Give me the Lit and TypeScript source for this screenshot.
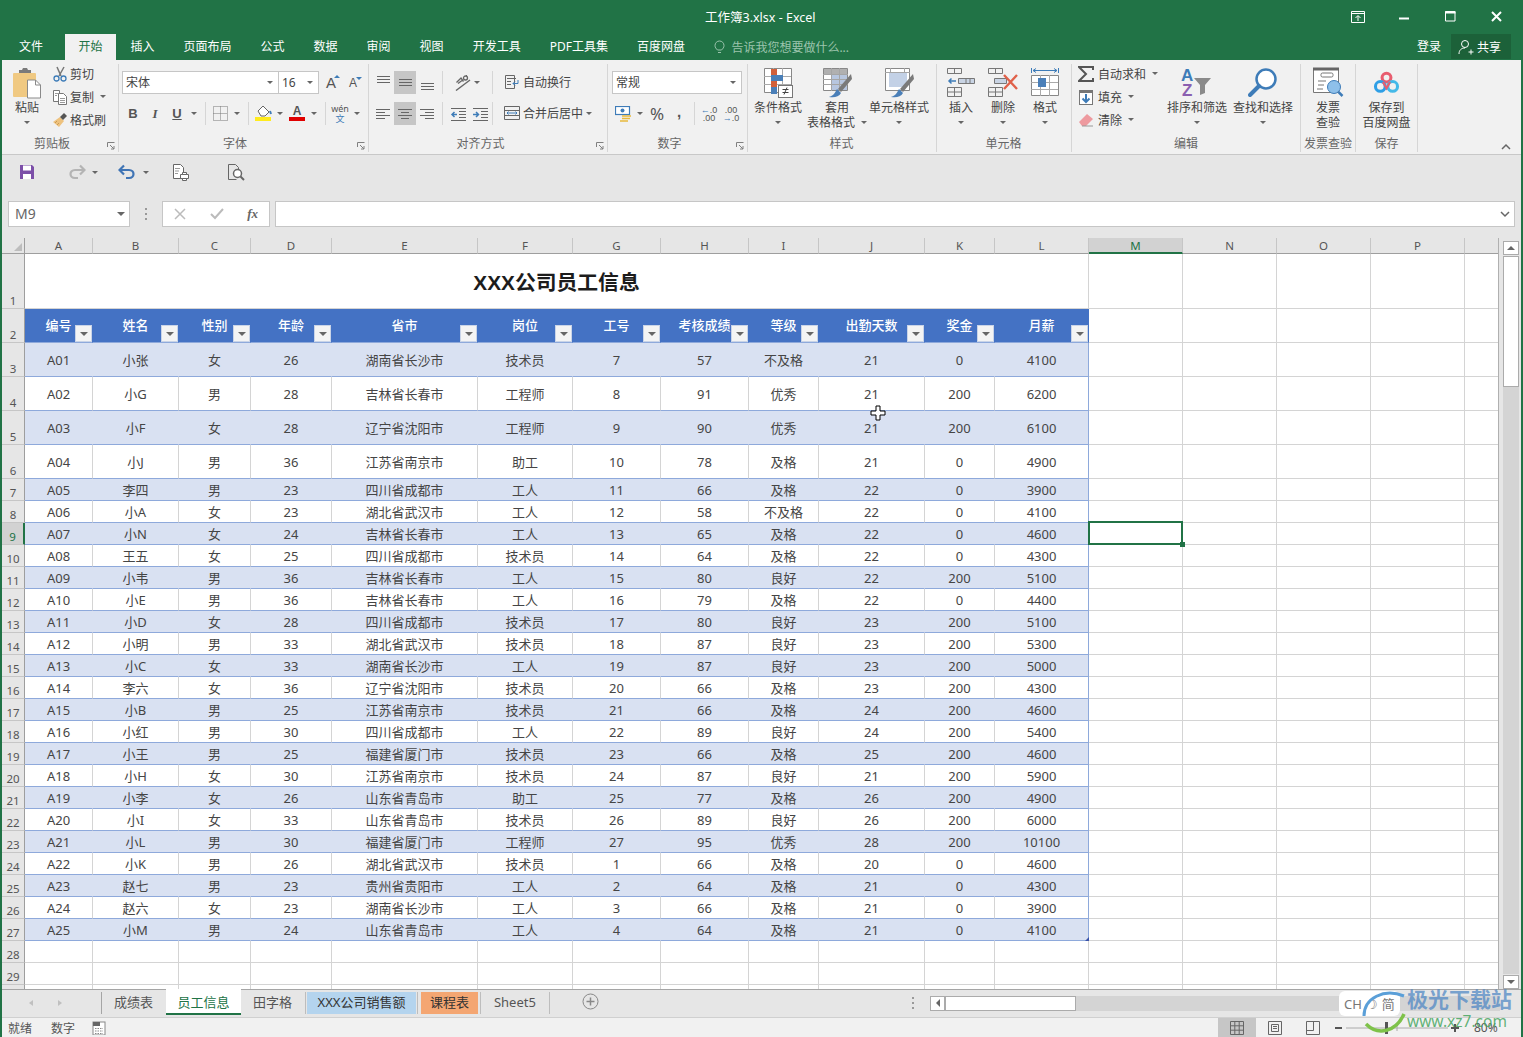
import { LitElement, css, html } from "lit";
import { customElement } from "lit/decorators.js";

// the last column is only a sliver at the window edge, its letter does not show
const COLS = "ABCDEFGHIJKLMNOP".split("").concat("");
const HEAD = ["编号", "姓名", "性别", "年龄", "省市", "岗位", "工号", "考核成绩", "等级", "出勤天数", "奖金", "月薪"];
// columns holding Chinese text sit a pixel higher than the digit columns
const CJK_COLS = [1, 2, 4, 5, 8];
const DATA = `A01 小张 女 26 湖南省长沙市 技术员 7 57 不及格 21 0 4100
A02 小G 男 28 吉林省长春市 工程师 8 91 优秀 21 200 6200
A03 小F 女 28 辽宁省沈阳市 工程师 9 90 优秀 21 200 6100
A04 小J 男 36 江苏省南京市 助工 10 78 及格 21 0 4900
A05 李四 男 23 四川省成都市 工人 11 66 及格 22 0 3900
A06 小A 女 23 湖北省武汉市 工人 12 58 不及格 22 0 4100
A07 小N 女 24 吉林省长春市 工人 13 65 及格 22 0 4600
A08 王五 女 25 四川省成都市 技术员 14 64 及格 22 0 4300
A09 小韦 男 36 吉林省长春市 工人 15 80 良好 22 200 5100
A10 小E 男 36 吉林省长春市 工人 16 79 及格 22 0 4400
A11 小D 女 28 四川省成都市 技术员 17 80 良好 23 200 5100
A12 小明 男 33 湖北省武汉市 技术员 18 87 良好 23 200 5300
A13 小C 女 33 湖南省长沙市 工人 19 87 良好 23 200 5000
A14 李六 女 36 辽宁省沈阳市 技术员 20 66 及格 23 200 4300
A15 小B 男 25 江苏省南京市 技术员 21 66 及格 24 200 4600
A16 小红 男 30 四川省成都市 工人 22 89 良好 24 200 5400
A17 小王 男 25 福建省厦门市 技术员 23 66 及格 25 200 4600
A18 小H 女 30 江苏省南京市 技术员 24 87 良好 21 200 5900
A19 小李 女 26 山东省青岛市 助工 25 77 及格 26 200 4900
A20 小I 女 33 山东省青岛市 技术员 26 89 良好 26 200 6000
A21 小L 男 30 福建省厦门市 工程师 27 95 优秀 28 200 10100
A22 小K 男 26 湖北省武汉市 技术员 1 66 及格 20 0 4600
A23 赵七 男 23 贵州省贵阳市 工人 2 64 及格 21 0 4300
A24 赵六 女 23 湖南省长沙市 工人 3 66 及格 21 0 3900
A25 小M 男 24 山东省青岛市 工人 4 64 及格 21 0 4100`
  .split("\n")
  .map((l) => l.split(" "));

const TABS = ["插入", "页面布局", "公式", "数据", "审阅", "视图", "开发工具", "PDF工具集", "百度网盘"];

// ribbon icons, drawn at their real pixel size
const icons = {
  paste: html`<svg width="30" height="32" viewBox="0 0 30 32"><rect x="1" y="6" width="23" height="24" rx="1" fill="#f0c982"/><path d="M7 6V3h3l1-2h4l1 2h3v3z" fill="#7a7a7a"/><path d="M15.500 13h8l5 5v13h-13z" fill="#fff" stroke="#8a8a8a"/><path d="M23.500 13v5h5" fill="none" stroke="#8a8a8a"/></svg>`,
  cut: html`<svg width="16" height="16" viewBox="0 0 16 16"><path d="M5 1l4 9M12 1l-5 9" stroke="#777" stroke-width="1.500" fill="none"/><circle cx="4.500" cy="12.500" r="2.500" fill="none" stroke="#3e7cb8" stroke-width="1.300"/><circle cx="11.500" cy="12.500" r="2.500" fill="none" stroke="#3e7cb8" stroke-width="1.300"/></svg>`,
  copy: html`<svg width="16" height="16" viewBox="0 0 16 16" fill="#fff" stroke="#777"><path d="M1.500 1.500h6v11h-6z"/><path d="M6.500 4.500h5l3 3v8h-8z"/><path d="M8 9.500h5M8 11.500h5M8 13.500h5M3 4.500h3M3 6.500h2" stroke="#999"/></svg>`,
  brush: html`<svg width="16" height="16" viewBox="0 0 16 16"><path d="M8 5l4 4-5 6-6-5z" fill="#eec27e"/><path d="M8 5l4-4 3 3-4 4z" fill="#555"/><path d="M5 9l-2 2M7 11l-2 2" stroke="#c89a55"/></svg>`,
  alignTop: html`<svg width="16" height="16" viewBox="0 0 16 16" stroke="#666"><path d="M2 2.500h13M2 5.500h13M2 8.500h13" transform="translate(0 -1)"/></svg>`,
  alignMid: html`<svg width="16" height="16" viewBox="0 0 16 16" stroke="#666"><path d="M2 4.500h13M2 7.500h13M2 10.500h13"/></svg>`,
  alignBot: html`<svg width="16" height="16" viewBox="0 0 16 16" stroke="#666"><path d="M2 8.500h13M2 11.500h13M2 14.500h13"/></svg>`,
  left: html`<svg width="16" height="16" viewBox="0 0 16 16" stroke="#666"><path d="M1 3.500h14M1 6.500h9M1 9.500h14M1 12.500h9"/></svg>`,
  center: html`<svg width="16" height="16" viewBox="0 0 16 16" stroke="#666"><path d="M1 3.500h14M4 6.500h8M1 9.500h14M4 12.500h8"/></svg>`,
  right: html`<svg width="16" height="16" viewBox="0 0 16 16" stroke="#666"><path d="M1 3.500h14M6 6.500h9M1 9.500h14M6 12.500h9"/></svg>`,
  orient: html`<svg width="16" height="16" viewBox="0 0 16 16" fill="none" stroke="#666"><path d="M1 15.500L15 5" stroke-width="1.400"/><path d="M1.500 7.500L6 3l2.500 3.500M3 8.500l4-3" stroke-width="1.300"/><circle cx="10.500" cy="3" r="2" stroke-width="1.300"/><path d="M12 .5l-1 0" /></svg>`,
  indentL: html`<svg width="17" height="14" viewBox="0 0 17 14" stroke="#666"><path d="M1 1.500h15M9 4.500h7M9 7.500h7M9 10.500h7M1 13.500h15"/><path d="M7 7.500H2m2.500-2.500L2 7.500 4.500 10" stroke="#3e7cb8" stroke-width="1.500" fill="none"/></svg>`,
  indentR: html`<svg width="17" height="14" viewBox="0 0 17 14" stroke="#666"><path d="M1 1.500h15M9 4.500h7M9 7.500h7M9 10.500h7M1 13.500h15"/><path d="M1 7.500h5M4 5l2.500 2.500L4 10" stroke="#3e7cb8" stroke-width="1.500" fill="none"/></svg>`,
  wrap: html`<svg width="16" height="16" viewBox="0 0 16 16" fill="none" stroke="#666"><path d="M1.500 1.500h9v13h-9zM3 4.500h9M3 7.500h4M3 10.500h4"/><path d="M9 9.500h5V6M9 9.500l2-2M9 9.500l2 2" stroke="#3e7cb8"/></svg>`,
  merge: html`<svg width="16" height="16" viewBox="0 0 16 16" fill="none" stroke="#666"><path d="M.5 1.500h15v13H.5zM.5 5.500h15M.5 10.500h15"/><path d="M3 8h10M4.500 6.500L3 8l1.500 1.500M11.500 6.500L13 8l-1.500 1.500" stroke="#3e7cb8"/></svg>`,
  currency: html`<svg width="17" height="16" viewBox="0 0 17 16"><rect x=".5" y=".5" width="14" height="8" fill="#fff" stroke="#3e7cb8" stroke-width="1.200"/><circle cx="7.500" cy="4.500" r="2" fill="#3e7cb8"/><path d="M7 10h9M7 12.500h8M5 15h8" stroke="#e8b93c" stroke-width="1.600"/></svg>`,
  fmtCond: html`<svg width="30" height="32" viewBox="0 0 30 32"><path d="M1.500 1.500h27v24h-27z" fill="#fff" stroke="#888"/><path d="M10.500 1v25M19.500 1v25M1 9.500h27M1 17.500h27" stroke="#aaa"/><rect x="8" y="2" width="6" height="7" fill="#d2603a"/><rect x="8" y="8" width="12" height="6" fill="#4a7fb8"/><rect x="8" y="14" width="6" height="6" fill="#d2603a"/><rect x="8" y="20" width="6" height="7" fill="#4a7fb8"/><rect x="15.500" y="18.500" width="14" height="12" fill="#fff" stroke="#777"/><path d="M19.500 22.500h6M19.500 25.500h6M24 20.500l-3 7" stroke="#444"/></svg>`,
  fmtTable: html`<svg width="30" height="32" viewBox="0 0 30 32"><path d="M1.500 1.500h24v22h-24z" fill="#fff" stroke="#888"/><rect x="2" y="2" width="23" height="5" fill="#b0b0b0"/><rect x="9" y="7" width="16" height="16" fill="#b7c6df"/><path d="M9.500 1v23M17.500 1v23M1 7.500h25M1 12.500h25M1 17.500h25" stroke="#a5a5a5"/><path d="M29 7L16 22l3 3L30 12z" fill="#7a7a7a"/><path d="M15 22l4 4c-2 4-7 5-12 4 3-1 5-2 8-8z" fill="#4a7fb8"/></svg>`,
  fmtCell: html`<svg width="30" height="32" viewBox="0 0 30 32"><path d="M1.500 1.500h24v22h-24z" fill="#fff" stroke="#888"/><rect x="5" y="5" width="18" height="15" fill="#c3d1e6"/><path d="M6.500 1v4M20.500 1v4M1 5.500h25" stroke="#a5a5a5"/><path d="M29 7L16 22l3 3L30 12z" fill="#7a7a7a"/><path d="M15 22l4 4c-2 4-7 5-12 4 3-1 5-2 8-8z" fill="#4a7fb8"/></svg>`,
  insert: html`<svg width="28" height="30" viewBox="0 0 28 30" fill="none" stroke="#777"><path d="M.5 1.500h14v5H.5zM7.500 1.500v5M.5 20.500h14v9H.5zM.5 25h14M7.500 20.500v9"/><path d="M11.500 11.500h16v5h-16zM19 11.500v5M23 11.500v5" fill="#c9d4e4"/><path d="M9 14H2m2.500-2.500L2 14l2.500 2.500" stroke="#3e7cb8" stroke-width="1.500"/></svg>`,
  del: html`<svg width="30" height="30" viewBox="0 0 30 30" fill="none" stroke="#777"><path d="M.5 1.500h14v5H.5zM7.500 1.500v5M.5 20.500h14v9H.5zM.5 25h14M7.500 20.500v9"/><path d="M6.500 11.500h12v5h-12z" fill="#c9d4e4"/><path d="M16 8l13 14M29 8L16 22" stroke="#e0614a" stroke-width="2.400"/></svg>`,
  format: html`<svg width="30" height="32" viewBox="0 0 30 32" fill="none"><path d="M1.500 6v-5M28.500 6v-5M3 3.500h24M3 3.500l3-2M3 3.500l3 2M27 3.500l-3-2M27 3.500l-3 2" stroke="#3e7cb8"/><path d="M1.500 8.500h27v20h-27z" fill="#fff" stroke="#888"/><path d="M10.500 8v21M19.500 8v21M1 15.500h27M1 22.500h27" stroke="#aaa"/><rect x="8" y="11" width="8" height="9" fill="#4a7fb8"/></svg>`,
  sigma: html`<svg width="16" height="16" viewBox="0 0 16 16"><path d="M15 4V1H1l7 7-7 7h14v-3" fill="none" stroke="#555" stroke-width="2"/></svg>`,
  fill: html`<svg width="16" height="16" viewBox="0 0 16 16"><rect x="1.500" y="1.500" width="13" height="14" fill="#fff" stroke="#777"/><rect x="1" y="1" width="14" height="3" fill="#777"/><path d="M8 5v8M4.500 9.500L8 13l3.500-3.500" fill="none" stroke="#3e7cb8" stroke-width="2"/></svg>`,
  clear: html`<svg width="16" height="16" viewBox="0 0 16 16"><path d="M1 10l8-8 6 5-7 7H4z" fill="#ee9a9f"/><path d="M4 14h11" stroke="#999"/></svg>`,
  sort: html`<svg width="32" height="32" viewBox="0 0 32 32"><path d="M13 11h17l-6 7v8l-5 2V18z" fill="#8a8a8a"/><text x="0" y="14" font-size="17" font-weight="700" fill="#3e7cb8" font-family="Liberation Sans">A</text><text x="1" y="29" font-size="17" font-weight="700" fill="#8a5fb0" font-family="Liberation Sans">Z</text></svg>`,
  find: html`<svg width="30" height="32" viewBox="0 0 30 32" fill="none"><circle cx="18" cy="12" r="9.500" fill="#fff" stroke="#3e7cb8" stroke-width="2.500"/><path d="M11 19L2 28" stroke="#3e7cb8" stroke-width="4" stroke-linecap="round"/></svg>`,
  invoice: html`<svg width="32" height="32" viewBox="0 0 32 32" fill="none"><path d="M1.500 1.500h25v24h-25z" fill="#fff" stroke="#777"/><path d="M1 2h26" stroke="#666" stroke-width="3"/><rect x="9" y="6" width="12" height="4" rx="1.500" stroke="#777"/><path d="M6 14h8M6 18h6M5 22h6" stroke="#777"/><circle cx="22" cy="20" r="6.500" fill="#8ec0ea" stroke="#3e7cb8"/><path d="M26.500 25l4 4" stroke="#3e7cb8" stroke-width="2.500"/></svg>`,
  baidu: html`<svg width="27" height="30" viewBox="0 -3 30 34" fill="none"><circle cx="15" cy="9" r="5" stroke="#e85d6f" stroke-width="3.500"/><circle cx="8" cy="19" r="5.500" stroke="#2e9fe6" stroke-width="3.500"/><circle cx="22" cy="19" r="5.500" stroke="#44b9e8" stroke-width="3.500"/><path d="M11 14l4 7 4-7" stroke="#e85d6f" stroke-width="2.500"/></svg>`,
  save: html`<svg width="18" height="18" viewBox="0 0 18 18"><path d="M2 2h12l2 2v12H2z" fill="#7c4fa8"/><rect x="5" y="2.500" width="8" height="5" fill="#fff"/><rect x="5" y="11" width="8" height="5" fill="#fff"/></svg>`,
  redo: html`<svg width="18" height="16" viewBox="0 0 18 16" fill="none" stroke="#b4b4b4" stroke-width="2.200"><path d="M16 6H7c-6 0-6 8 0 8h3"/><path d="M12 1.500L16.500 6 12 10.500"/></svg>`,
  undo: html`<svg width="18" height="16" viewBox="0 0 18 16" fill="none" stroke="#3f74b5" stroke-width="2.200"><path d="M2 6h9c6 0 6 8 0 8H8"/><path d="M6 1.500L1.500 6 6 10.500"/></svg>`,
  print: html`<svg width="18" height="18" viewBox="0 0 18 18" fill="#fff" stroke="#666"><path d="M1.500 1.500h7l3 3v11h-10z"/><path d="M3 5.500h5M3 8h4M3 10.500h3" stroke="#999"/><path d="M8.500 11.500h8v4h-8z"/><path d="M10.500 9.500h4v2h-4zM10.500 15.500h4v2h-4z"/></svg>`,
  preview: html`<svg width="18" height="18" viewBox="0 0 18 18" fill="none" stroke="#666"><path d="M1.500 1.500h7l3 3v6M1.500 1.500v15h8"/><circle cx="10.500" cy="10.500" r="4" fill="#fff" stroke-width="1.500"/><path d="M13.500 13.500l3.500 3.500" stroke-width="2"/></svg>`,
  launcher: html`<svg width="8" height="8" viewBox="0 0 8 8" fill="none" stroke="#808080"><path d="M.5 5V.5H7.500"/><path d="M3 3l4 4M7 4v3H4"/></svg>`,
};

const caret = html`<span class="c"></span>`;
const sep = html`<span class="s"></span>`;

function big(icon: unknown, lines: string[], drop: "none" | "below" | "inline" = "below") {
  return html`<div class="big">
    <div class="big-icon">${icon}</div>
    ${lines.map(
      (l, i) => html`<div class="big-line">${l}${drop === "inline" && i === lines.length - 1 ? html`<i class="tri in"></i>` : ""}</div>`
    )}
    ${drop === "below" ? html`<div class="big-line"><i class="tri"></i></div>` : ""}
  </div>`;
}

function small(icon: unknown, text: string, drop = false) {
  return html`<div class="small">
    <span class="small-icon">${icon}</span><span>${text}</span>${drop ? html`<i class="tri in"></i>` : ""}
  </div>`;
}

function group(cls: string, label: string, body: unknown, launcher = false) {
  return html`<section class="group ${cls}">
    <div class="group-body">${body}</div>
    <div class="group-label">${label}</div>
    ${launcher ? html`<span class="launcher">${icons.launcher}</span>` : ""}
  </section>`;
}

@customElement("app-root")
export class AppRoot extends LitElement {
  static styles = css`
    :host {
      display: block;
      width: 1523px;
      height: 1037px;
      overflow: hidden;
      font-family: "Noto Sans", "Noto Sans CJK SC", sans-serif;
      font-size: 12px;
      color: #444;
    }
    * {
      box-sizing: border-box;
    }
    .window {
      position: relative;
      display: flex;
      flex-direction: column;
      height: 1037px;
      border-left: 2px solid #217346;
      border-right: 2px solid #217346;
      background: #e6e6e6;
    }
    svg {
      display: block;
      flex: none;
    }

    .titlebar {
      display: flex;
      align-items: center;
      height: 34px;
      background: #217346;
      color: #fff;
      flex: none;
    }
    .doc-title {
      margin-left: 703px;
      padding-bottom: 2px;
      font-size: 12.5px;
    }
    .controls {
      display: flex;
      margin-left: auto;
      margin-right: 2px;
    }
    .controls span {
      width: 46px;
      display: flex;
      justify-content: center;
    }

    .tabbar {
      display: flex;
      height: 26px;
      background: #217346;
      color: #fff;
      flex: none;
    }
    .tab {
      display: flex;
      align-items: center;
      padding: 0 14.5px 2px;
      white-space: nowrap;
    }
    .tab.file {
      padding: 0 22px 2px 17px;
    }
    .tab.active {
      padding: 0 13.5px 2px;
      background: #f1f1f1;
      color: #217346;
    }
    .tip {
      display: flex;
      align-items: center;
      gap: 6px;
      margin-left: 15px;
      color: #9cc4ad;
    }
    .login {
      margin-left: auto;
      align-self: center;
      padding-bottom: 2px;
    }
    .share {
      display: flex;
      align-items: center;
      gap: 3px;
      width: 60px;
      margin: 0 10px 1px 10px;
      padding-left: 7px;
      background: #1c6139;
    }

    .ribbon {
      display: flex;
      height: 95px;
      flex: none;
      position: relative;
      background: #f1f1f1;
      border-bottom: 1px solid #c8c8c8;
    }
    .group {
      position: relative;
      display: flex;
      flex-direction: column;
      height: 88px;
      margin-top: 4px;
      border-right: 1px solid #d6d6d6;
    }
    .group-body {
      display: flex;
      height: 72px;
    }
    .group-label {
      height: 16px;
      line-height: 16px;
      text-align: center;
      color: #666;
    }
    .launcher {
      position: absolute;
      right: 3px;
      bottom: 2px;
    }
    .g-clip { width: 117px; }
    .g-font { width: 250px; padding-left: 3px; }
    .g-align { width: 239px; padding-left: 3px; }
    .g-num { width: 140px; padding-left: 4px; }
    .g-style { width: 189px; padding-left: 5px; }
    .g-cell { width: 135px; padding-left: 3px; }
    .g-edit { width: 229px; padding-left: 6px; }
    .g-inv { width: 55px; }
    .g-save { width: 62px; }
    .g-clip .group-label { padding-right: 16px; }
    .g-font .group-label { padding-right: 20px; }
    .g-align .group-label { padding-right: 18px; }
    .g-num .group-label { padding-right: 20px; }
    .g-style .group-label { padding-right: 6px; }
    .g-cell .group-label { padding-right: 4px; }
    .g-edit .group-label { padding-right: 6px; }

    .big {
      display: flex;
      flex-direction: column;
      align-items: center;
      padding-top: 3px;
      flex: none;
      white-space: nowrap;
    }
    .big-icon {
      height: 33px;
      display: flex;
      justify-content: center;
    }
    .big-line {
      height: 15px;
      line-height: 15px;
      display: flex;
      align-items: center;
    }
    .w50 { width: 50px; }
    .w58 { width: 58px; margin-left: 5px; }
    .w66 { width: 66px; }
    .w42 { width: 42px; }
    .w54 { width: 54px; }
    .w61 { width: 61px; }

    .small-col {
      display: flex;
      flex-direction: column;
      margin-top: -2px;
      flex: none;
    }
    .small-col.edit {
      width: 86px;
    }
    .small {
      display: flex;
      align-items: center;
      height: 23px;
      white-space: nowrap;
    }
    .small-icon {
      width: 18px;
      flex: none;
    }
    .g-edit .small-icon {
      width: 20px;
    }
    .tri {
      display: block;
      width: 0;
      height: 0;
      border-left: 3px solid transparent;
      border-right: 3px solid transparent;
      border-top: 3px solid #666;
    }
    .tri.in {
      margin-left: 6px;
    }
    .c {
      display: flex;
      width: 12px;
      height: 23px;
      align-items: center;
      justify-content: center;
      flex: none;
    }
    .c::before {
      content: "";
      border-left: 3px solid transparent;
      border-right: 3px solid transparent;
      border-top: 3px solid #666;
    }
    .s {
      width: 1px;
      height: 23px;
      margin: 0 3px 0 5px;
      background: #d6d6d6;
      flex: none;
    }
    .s.a {
      margin: 0 3px 0 4px;
    }
    .s.z {
      margin: 0 11px 0 0;
    }
    .stack {
      display: flex;
      flex-direction: column;
      gap: 8px;
      padding-top: 7px;
    }
    .line {
      display: flex;
      align-items: center;
      height: 23px;
    }
    .b {
      width: 22px;
      height: 23px;
      display: flex;
      align-items: center;
      justify-content: center;
      flex: none;
      color: #555;
    }
    .b.on {
      background: #c6c6c6;
    }
    .mid {
      display: flex;
      align-items: center;
      justify-content: center;
      width: 46px;
    }
    .wide {
      display: flex;
      align-items: center;
      gap: 3px;
      padding-bottom: 1px;
      white-space: nowrap;
    }
    .combo {
      display: flex;
      align-items: center;
      height: 23px;
      padding: 0 0 1px 3px;
      background: #fff;
      border: 1px solid #c6c6c6;
      flex: none;
    }
    .combo::after {
      content: "";
      margin-left: auto;
      margin-right: 5px;
      border-left: 3px solid transparent;
      border-right: 3px solid transparent;
      border-top: 3px solid #666;
    }
    .cb-font { width: 157px; }
    .cb-size { width: 41px; margin-left: -1px; }
    .cb-num { width: 130px; }
    .grow {
      position: relative;
      width: 22px;
      text-align: center;
      font: 15px "Liberation Sans", sans-serif;
      color: #555;
      flex: none;
    }
    .grow.m1 { margin-left: 1px; }
    .grow.small-a { font-size: 12px; }
    .grow sup {
      position: absolute;
      top: 1px;
      right: 2px;
      width: 0;
      height: 0;
      border-left: 3px solid transparent;
      border-right: 3px solid transparent;
      border-bottom: 3px solid #3e7cb8;
    }
    .grow.small-a sup {
      border-bottom: 0;
      border-top: 3px solid #3e7cb8;
    }
    .bold {
      font: 700 13px "Liberation Sans", sans-serif;
    }
    .comma {
      font: 700 15px "Liberation Sans", sans-serif;
      padding-bottom: 5px;
    }
    .ital {
      font: italic 700 13px "Liberation Serif", serif;
    }
    .und {
      font: 700 13px "Liberation Sans", sans-serif;
      text-decoration: underline;
    }
    .pct {
      font-size: 17px;
      color: #555;
    }
    .dec {
      font: 9px/8px "Liberation Sans", sans-serif;
      color: #555;
      text-align: center;
      white-space: nowrap;
    }
    .dec em {
      font-style: normal;
      color: #3e7cb8;
    }
    .font-a {
      display: flex;
      flex-direction: column;
      align-items: center;
      font: 700 12px/11px "Liberation Sans", sans-serif;
      color: #555;
    }
    .font-a i {
      display: block;
      width: 16px;
      height: 4px;
      background: #e00000;
    }
    .wen {
      font: 9px/10px "Noto Sans", "Noto Sans CJK SC", sans-serif;
      color: #555;
      text-align: center;
    }
    .wen em {
      display: block;
      font-style: normal;
      color: #3e7cb8;
      font-size: 9px;
      line-height: 9px;
    }
    .collapse {
      position: absolute;
      right: 10px;
      bottom: 4px;
    }

    .qat {
      display: flex;
      align-items: center;
      height: 45px;
      padding-bottom: 11px;
      flex: none;
    }
    .qat .c { height: 18px; }
    .q-save { margin-left: 16px; }
    .q-redo { margin-left: 32px; }
    .q-c1 { margin-left: 3px; }
    .q-undo { margin-left: 17px; }
    .q-c2 { margin-left: 4px; }
    .q-print { margin-left: 20px; }
    .q-prev { margin-left: 37px; }

    .formula {
      display: flex;
      align-items: flex-start;
      height: 38px;
      padding-top: 1px;
      flex: none;
    }
    .namebox {
      display: flex;
      align-items: center;
      width: 122px;
      height: 26px;
      margin-left: 6px;
      padding: 0 0 1px 6px;
      font-size: 14px;
      color: #666;
      background: #fff;
      border: 1px solid #c6c6c6;
    }
    .namebox::after {
      content: "";
      margin-left: auto;
      margin-right: 4px;
      border-left: 4px solid transparent;
      border-right: 4px solid transparent;
      border-top: 4px solid #666;
    }
    .dots {
      width: 32px;
      height: 26px;
      display: flex;
      align-items: center;
      justify-content: center;
    }
    .fx-box {
      display: flex;
      align-items: center;
      justify-content: space-between;
      width: 108px;
      height: 26px;
      padding: 0 11px;
      background: #fff;
      border: 1px solid #c6c6c6;
    }
    .fx {
      font: italic 700 13px "Liberation Serif", serif;
      color: #666;
    }
    .bar-input {
      display: flex;
      align-items: center;
      justify-content: flex-end;
      width: 1240px;
      height: 26px;
      margin-left: 5px;
      padding-right: 4px;
      background: #fff;
      border: 1px solid #c6c6c6;
    }

    .sheet {
      display: flex;
      flex: 1;
      min-height: 0;
    }
    .grid {
      display: grid;
      grid-template-columns: 23px 68px 86px 72px 81px 146px 95px 88px 88px 70px 106px 70px 94px 94px 94px 94px 94px 34px;
      grid-template-rows: 16px 55px repeat(5, 34px) repeat(24, 22px);
      width: 1497px;
      height: 751px;
      overflow: hidden;
      background: #fff;
      flex: none;
      align-content: start;
      border-right: 1px solid #b0b0b0;
    }
    .ch {
      display: flex;
      align-items: center;
      justify-content: center;
      font-size: 11.500px;
      color: #555;
      background: #e6e6e6;
      border-right: 1px solid #c6c6c6;
      border-bottom: 1px solid #9e9e9e;
    }
    .ch.on {
      background: #d2d2d2;
      color: #217346;
      border-bottom: 2px solid #217346;
    }
    .corner {
      background: #e6e6e6;
      border-right: 1px solid #9e9e9e;
      border-bottom: 1px solid #9e9e9e;
      position: relative;
    }
    .corner::after {
      content: "";
      position: absolute;
      right: 2px;
      bottom: 2px;
      border-left: 8px solid transparent;
      border-bottom: 8px solid #bdbdbd;
    }
    .rh {
      display: flex;
      align-items: flex-end;
      justify-content: center;
      font-size: 11.500px;
      line-height: 14px;
      color: #555;
      background: #e6e6e6;
      border-right: 1px solid #9e9e9e;
      border-bottom: 1px solid #c6c6c6;
    }
    .rh.on {
      background: #d2d2d2;
      color: #217346;
      border-right: 2px solid #217346;
    }
    .cell {
      position: relative;
      display: flex;
      align-items: center;
      justify-content: center;
      font-size: 13px;
      color: #454545;
      border-right: 1px solid #d4d4d4;
      border-bottom: 1px solid #d4d4d4;
      white-space: nowrap;
    }
    .title {
      grid-column: span 12;
      font: 700 20.800px "Liberation Sans", "Noto Sans CJK SC", sans-serif;
      color: #1c1c1c;
    }
    .th {
      background: #4472c4;
      color: #fff;
      font-size: 13px;
      font-weight: 500;
      padding-bottom: 3px;
      border-right-color: #4472c4;
      border-bottom-color: #8ea9db;
    }
    .td {
      padding-top: 1px;
      border-bottom-color: #8ea9db;
    }
    .td.cjk {
      padding-top: 0;
    }
    .td.blue {
      background: #d9e1f2;
      border-right-color: #d9e1f2;
    }
    .td.last {
      border-right-color: #8ea9db;
    }
    .resize::after {
      content: "";
      position: absolute;
      right: -1px;
      bottom: -1px;
      border-left: 4px solid transparent;
      border-bottom: 4px solid #3a52a8;
    }
    .filter {
      position: absolute;
      right: 0;
      bottom: 0;
      display: flex;
      align-items: center;
      justify-content: center;
      width: 17px;
      height: 17px;
      background: #f4f4f4;
      border: 1px solid #c9d4e8;
    }
    .filter::before {
      content: "";
      border-left: 4px solid transparent;
      border-right: 4px solid transparent;
      border-top: 4px solid #666;
    }
    .sel::before {
      content: "";
      position: absolute;
      top: -2px;
      left: -1px;
      right: -1px;
      bottom: -1px;
      border: 2px solid #217346;
      z-index: 2;
    }
    .sel::after {
      content: "";
      position: absolute;
      right: -3px;
      bottom: -3px;
      width: 5px;
      height: 5px;
      background: #217346;
      border: 0;
      z-index: 3;
    }

    .vscroll {
      display: flex;
      flex-direction: column;
      width: 23px;
      padding: 3px 3px 0 4px;
      flex: none;
    }
    .arrow {
      display: flex;
      align-items: center;
      justify-content: center;
      height: 14px;
      background: #fff;
      border: 1px solid #ababab;
      flex: none;
    }
    .arrow.up::before {
      content: "";
      border-left: 4px solid transparent;
      border-right: 4px solid transparent;
      border-bottom: 4px solid #666;
    }
    .arrow.down::before {
      content: "";
      border-left: 4px solid transparent;
      border-right: 4px solid transparent;
      border-top: 4px solid #666;
    }
    .v-track {
      flex: 1;
      background: #d4d4d4;
      margin: 1px 0;
    }
    .v-thumb {
      height: 131px;
      background: #fff;
      border: 1px solid #ababab;
    }

    .sheets {
      display: flex;
      height: 28px;
      flex: none;
      border-top: 1px solid #a5a5a5;
      font-size: 13px;
      color: #555;
    }
    .nav {
      display: flex;
      align-items: center;
      width: 100px;
      padding-left: 27px;
      gap: 25px;
      border-right: 1px solid #a5a5a5;
      height: 22px;
      margin-top: 2px;
    }
    .nav i {
      border-top: 3px solid transparent;
      border-bottom: 3px solid transparent;
    }
    .nav i.l { border-right: 4px solid #c0c0c0; }
    .nav i.r { border-left: 4px solid #c0c0c0; }
    .st {
      display: flex;
      align-items: center;
      height: 25px;
      margin-top: -1px;
      padding: 0 11px;
      white-space: nowrap;
    }
    .st.on {
      margin-top: -1px;
      height: 26px;
      padding: 0 11.500px;
      background: #fff;
      color: #217346;
      border-bottom: 2px solid #217346;
    }
    .st.sh5 {
      padding: 0 13px;
    }
    .st.t1 { padding: 0 13px 0 12px; }
    .st.t3 { padding: 0 13px 0 12px; }
    .st.blue {
      height: 22px;
      margin: 2px 1px 0 1px;
      padding: 0 10.500px 4px;
      background: #b4d4ee;
      color: #333;
    }
    .st.orange {
      height: 22px;
      margin: 2px 2px 0 3px;
      padding: 0 9px 4px;
      background: #f4a672;
      color: #333;
    }
    .sep-tab {
      width: 1px;
      height: 22px;
      margin-top: 2px;
      background: #bdbdbd;
    }
    .add {
      margin: 3px 0 0 32px;
    }
    .hscroll {
      display: flex;
      align-items: center;
      margin-left: auto;
      margin-right: 21px;
      height: 26px;
      flex: none;
    }
    .h-dots {
      width: 22px;
      display: flex;
      justify-content: center;
      margin-right: 6px;
    }
    .h-left {
      display: flex;
      align-items: center;
      justify-content: center;
      width: 15px;
      height: 15px;
      background: #fff;
      border: 1px solid #ababab;
    }
    .h-left::before {
      content: "";
      border-top: 4px solid transparent;
      border-bottom: 4px solid transparent;
      border-right: 4px solid #666;
    }
    .h-track {
      width: 555px;
      height: 15px;
      background: #d4d4d4;
    }
    .h-thumb {
      width: 131px;
      height: 15px;
      background: #fff;
      border: 1px solid #ababab;
    }

    .status {
      display: flex;
      align-items: center;
      height: 20px;
      flex: none;
      background: #f1f1f1;
      border-top: 1px solid #d0d0d0;
      color: #555;
    }
    .st-txt { margin-left: 6px; }
    .st-txt + .st-txt { margin-left: 19px; }
    .st-calc { margin-left: 17px; }
    .views {
      display: flex;
      align-items: center;
      margin-left: auto;
      margin-right: 13px;
      height: 20px;
    }
    .view {
      display: flex;
      align-items: center;
      justify-content: center;
      width: 38px;
      height: 20px;
    }
    .view.on { background: #c6c6c6; }
    .pct80 {
      width: 46px;
      padding-left: 12px;
    }

    .cursor {
      position: absolute;
      left: 868px;
      top: 405px;
      z-index: 5;
    }
    .ime {
      position: absolute;
      left: 1337px;
      top: 991px;
      display: flex;
      align-items: center;
      gap: 4px;
      width: 61px;
      height: 25px;
      padding-left: 5px;
      background: #fff;
      border-radius: 6px;
      color: #777;
      font-size: 13px;
      z-index: 5;
    }
    .swirl {
      position: absolute;
      left: 1354px;
      top: 984px;
      z-index: 6;
    }
    .wm {
      position: absolute;
      left: 1405px;
      top: 985px;
      z-index: 7;
      white-space: nowrap;
      font: 700 21px/26px "Noto Sans CJK SC", sans-serif;
      color: rgba(70, 130, 195, 0.7);
    }
    .wm-url {
      position: absolute;
      left: 1405px;
      top: 1012px;
      z-index: 7;
      font: 15.500px/18px "Noto Sans", sans-serif;
      color: rgba(70, 165, 95, 0.85);
    }
  `;

  private renderGrid() {
    const cells: unknown[] = [html`<div class="corner"></div>`];
    COLS.forEach((c) => cells.push(html`<div class="ch ${c === "M" ? "on" : ""}">${c}</div>`));
    const blanks = (n: number, rowNo: number) =>
      Array.from({ length: n }, (_, i) => html`<div class="cell ${rowNo === 9 && i === 0 ? "sel" : ""}"></div>`);

    cells.push(html`<div class="rh">1</div><div class="cell title">XXX公司员工信息</div>`, ...blanks(5, 1));
    cells.push(html`<div class="rh">2</div>`);
    HEAD.forEach((h) => cells.push(html`<div class="cell th">${h}<span class="filter"></span></div>`));
    cells.push(...blanks(5, 2));
    DATA.forEach((row, i) => {
      const no = i + 3;
      cells.push(html`<div class="rh ${no === 9 ? "on" : ""}">${no}</div>`);
      row.forEach((v, j) => {
        const last = j === row.length - 1;
        cells.push(html`<div class="cell td ${CJK_COLS.includes(j) ? "cjk" : ""} ${i % 2 === 0 ? "blue" : ""} ${last ? "last" : ""} ${last && i === DATA.length - 1 ? "resize" : ""}">${v}</div>`);
      });
      cells.push(...blanks(5, no));
    });
    // row 30 is cut by the tab bar, only its top edge shows
    for (let no = 28; no <= 30; no++) {
      cells.push(html`<div class="rh">${no < 30 ? no : ""}</div>`, ...blanks(17, no));
    }
    return cells;
  }

  render() {
    return html`<div class="window">
      <header class="titlebar">
        <span class="doc-title">工作簿3.xlsx - Excel</span>
        <div class="controls">
          <span><svg width="14" height="12" viewBox="0 0 14 12" fill="none" stroke="#fff"><path d="M.5.500h13v11H.5zM1 2.500h12"/><path d="M7 10V5M4.500 7L7 4.500 9.500 7" /></svg></span>
          <span><svg width="10" height="12" viewBox="0 0 10 12"><path d="M0 7.500h10" stroke="#fff" stroke-width="2"/></svg></span>
          <span><svg width="11" height="11" viewBox="0 0 11 11" fill="none" stroke="#fff"><path d="M.5.500h9.500v9.500H.5z"/><path d="M0 1.500h10.500" stroke-width="2"/></svg></span>
          <span><svg width="11" height="11" viewBox="0 0 11 11" stroke="#fff" stroke-width="2"><path d="M1 1l9 9M10 1l-9 9"/></svg></span>
        </div>
      </header>

      <nav class="tabbar">
        <div class="tab file">文件</div>
        <div class="tab active">开始</div>
        ${TABS.map((t) => html`<div class="tab">${t}</div>`)}
        <div class="tip">
          <svg width="11" height="15" viewBox="0 0 11 15" fill="none" stroke="#9cc4ad"><path d="M3.500 10C2 8.500 1 7.500 1 5.500a4.500 4.500 0 019 0c0 2-1 3-2.500 4.500zM4 12.500h3"/></svg>
          <span>告诉我您想要做什么...</span>
        </div>
        <div class="login">登录</div>
        <div class="share">
          <svg width="16" height="16" viewBox="0 0 16 16" fill="none" stroke="#fff"><circle cx="7" cy="5" r="3.500"/><path d="M1 15c0-4 2.500-6 6-6M10.500 13h5M13 10.500v5"/></svg>
          <span>共享</span>
        </div>
      </nav>

      <div class="ribbon">
        ${group("g-clip", "剪贴板", html`
          <div class="w50">${big(icons.paste, ["粘贴"])}</div>
          <div class="small-col">
            ${small(icons.cut, "剪切")}
            <div class="small"><span class="small-icon">${icons.copy}</span><span>复制</span><i class="tri in"></i></div>
            ${small(icons.brush, "格式刷")}
          </div>`, true)}

        ${group("g-font", "字体", html`
          <div class="stack">
            <div class="line">
              <span class="combo cb-font">宋体</span><span class="combo cb-size">16</span>
              <span class="grow m1">A<sup></sup></span><span class="grow small-a">A<sup></sup></span>
            </div>
            <div class="line">
              <span class="b bold">B</span><span class="b ital">I</span><span class="b und">U</span>${caret}${sep}
              <span class="b"><svg width="15" height="15" viewBox="0 0 15 15" fill="none" stroke="#777" stroke-dasharray="1 1"><path d="M.5.500h14v14H.5zM7.500.5v14M.5 7.500h14"/></svg></span>${caret}${sep}
              <span class="b"><svg width="17" height="17" viewBox="0 0 17 17"><path d="M3 6l5-5 6 6-4 4H6z" fill="#fff" stroke="#666"/><path d="M15 6l1 3" stroke="#3e7cb8" stroke-width="2"/><rect y="12" width="16" height="4" fill="#ffeb1e"/></svg></span>${caret}
              <span class="b"><span class="font-a">A<i></i></span></span>${caret}${sep}
              <span class="b"><span class="wen">wén<em>文</em></span></span>${caret}
            </div>
          </div>`, true)}

        ${group("g-align", "对齐方式", html`
          <div class="stack">
            <div class="line">
              <span class="b">${icons.alignTop}</span><span class="b on">${icons.alignMid}</span><span class="b">${icons.alignBot}</span>
              <span class="s a"></span>
              <span class="mid">${icons.orient}<span class="c"></span></span>
              <span class="s z"></span>
              <span class="wide">${icons.wrap}<span>自动换行</span></span>
            </div>
            <div class="line">
              <span class="b">${icons.left}</span><span class="b on">${icons.center}</span><span class="b">${icons.right}</span>
              <span class="s a"></span>
              <span class="mid"><span class="b">${icons.indentL}</span><span class="b">${icons.indentR}</span></span>
              <span class="s z"></span>
              <span class="wide">${icons.merge}<span>合并后居中</span></span>${caret}
            </div>
          </div>`, true)}

        ${group("g-num", "数字", html`
          <div class="stack">
            <div class="line"><span class="combo cb-num">常规</span></div>
            <div class="line">
              <span class="b">${icons.currency}</span>${caret}
              <span class="b pct">%</span><span class="b comma">,</span>
              <span class="s a"></span>
              <span class="b"><span class="dec"><em>←</em>.0<br />.00</span></span>
              <span class="b"><span class="dec">.00<br /><em>→</em>.0</span></span>
            </div>
          </div>`, true)}

        ${group("g-style", "样式", html`
          <div class="w50">${big(icons.fmtCond, ["条件格式"])}</div>
          <div class="w58">${big(icons.fmtTable, ["套用", "表格格式"], "inline")}</div>
          <div class="w66">${big(icons.fmtCell, ["单元格样式"])}</div>`)}

        ${group("g-cell", "单元格", html`
          <div class="w42">${big(icons.insert, ["插入"])}</div>
          <div class="w42">${big(icons.del, ["删除"])}</div>
          <div class="w42">${big(icons.format, ["格式"])}</div>`)}

        ${group("g-edit", "编辑", html`
          <div class="small-col edit">
            ${small(icons.sigma, "自动求和", true)}
            ${small(icons.fill, "填充", true)}
            ${small(icons.clear, "清除", true)}
          </div>
          <div class="w66">${big(icons.sort, ["排序和筛选"])}</div>
          <div class="w66">${big(icons.find, ["查找和选择"])}</div>`)}

        ${group("g-inv", "发票查验", html`<div class="w54">${big(icons.invoice, ["发票", "查验"], "none")}</div>`)}
        ${group("g-save", "保存", html`<div class="w61">${big(icons.baidu, ["保存到", "百度网盘"], "none")}</div>`)}
        <span class="collapse"><svg width="10" height="7" viewBox="0 0 10 7" fill="none" stroke="#666" stroke-width="1.500"><path d="M1 6l4-4 4 4"/></svg></span>
      </div>

      <div class="qat">
        <span class="q-save">${icons.save}</span>
        <span class="q-redo">${icons.redo}</span><span class="c q-c1"></span>
        <span class="q-undo">${icons.undo}</span><span class="c q-c2"></span>
        <span class="q-print">${icons.print}</span>
        <span class="q-prev">${icons.preview}</span>
      </div>

      <div class="formula">
        <div class="namebox">M9</div>
        <div class="dots"><svg width="2" height="12" viewBox="0 0 2 12" fill="#999"><rect width="2" height="2"/><rect y="5" width="2" height="2"/><rect y="10" width="2" height="2"/></svg></div>
        <div class="fx-box">
          <svg width="12" height="12" viewBox="0 0 12 12" stroke="#bbb" stroke-width="1.500"><path d="M1 1l10 10M11 1L1 11"/></svg>
          <svg width="14" height="12" viewBox="0 0 14 12" fill="none" stroke="#bbb" stroke-width="2"><path d="M1 6l4 4 8-9"/></svg>
          <span class="fx">fx</span>
        </div>
        <div class="bar-input"><svg width="10" height="7" viewBox="0 0 10 7" fill="none" stroke="#666" stroke-width="1.500"><path d="M1 1l4 4 4-4"/></svg></div>
      </div>

      <div class="sheet">
        <div class="grid">${this.renderGrid()}</div>
        <div class="vscroll">
          <div class="arrow up"></div>
          <div class="v-track"><div class="v-thumb"></div></div>
          <div class="arrow down"></div>
        </div>
      </div>

      <div class="sheets">
        <div class="nav"><i class="l"></i><i class="r"></i></div>
        <div class="st t1">成绩表</div>
        <div class="st on">员工信息</div>
        <div class="st t3">田字格</div>
        <span class="sep-tab"></span>
        <div class="st blue">XXX公司销售额</div>
        <span class="sep-tab"></span>
        <div class="st orange">课程表</div>
        <span class="sep-tab"></span>
        <div class="st sh5">Sheet5</div>
        <span class="sep-tab"></span>
        <span class="add"><svg width="17" height="17" viewBox="0 0 17 17" fill="none" stroke="#888"><circle cx="8.500" cy="8.500" r="7.500"/><path d="M4.500 8.500h8M8.500 4.500v8" stroke-width="1.500"/></svg></span>
        <div class="hscroll">
          <span class="h-dots"><svg width="2" height="12" viewBox="0 0 2 12" fill="#999"><rect width="2" height="2"/><rect y="5" width="2" height="2"/><rect y="10" width="2" height="2"/></svg></span>
          <span class="h-left"></span>
          <div class="h-track"><div class="h-thumb"></div></div>
        </div>
      </div>

      <footer class="status">
        <span class="st-txt">就绪</span>
        <span class="st-txt">数字</span>
        <span class="st-calc"><svg width="14" height="14" viewBox="0 0 14 14"><rect x="1" y="1" width="12" height="13" fill="#fff" stroke="#888"/><rect x="1" y="1" width="7" height="4" fill="#666"/><path d="M3 7.500h8M3 10h8M3 12.500h8" stroke="#888" stroke-dasharray="1.500 1"/></svg></span>
        <div class="views">
          <span class="view on"><svg width="14" height="14" viewBox="0 0 14 14" fill="none" stroke="#666"><path d="M.5.500h13v13H.5zM4.800.5v13M9.200.5v13M.5 4.800h13M.5 9.200h13"/></svg></span>
          <span class="view"><svg width="14" height="14" viewBox="0 0 14 14" fill="none" stroke="#666"><path d="M.5.500h13v13H.5zM3.500 3.500h7v7h-7zM5 5.500h4M5 7.500h4"/></svg></span>
          <span class="view"><svg width="14" height="14" viewBox="0 0 14 14" fill="none" stroke="#666"><path d="M.5.500h13v13H.5zM.5 9.500h7V.5"/></svg></span>
          <svg width="130" height="14" viewBox="0 0 130 14"><path d="M3 7h7" stroke="#555" stroke-width="2"/><path d="M14 7h102" stroke="#aaa"/><rect x="53" y="1" width="3" height="12" fill="#555"/><path d="M65 4v6" stroke="#aaa"/><path d="M119 7h8M123 3v8" stroke="#555" stroke-width="2"/></svg>
          <span class="pct80">80%</span>
        </div>
      </footer>

      <svg class="cursor" width="16" height="16" viewBox="0 0 16 16"><path d="M6 1h4v5h5v4h-5v5H6v-5H1V6h5z" fill="#fff" stroke="#000"/></svg>
      <div class="ime"><span>CH</span><span>☽</span><span>简</span></div>
      <svg class="swirl" width="56" height="56" viewBox="0 0 56 56" fill="none"><path d="M8 32C8 14 28 4 48 12" stroke="#5a9fd8" stroke-width="3"/><path d="M10 40c12 12 30 8 38-10" stroke="#7ec24a" stroke-width="3.500"/></svg>
      <div class="wm">极光下载站</div>
      <div class="wm-url">www.xz7.com</div>
    </div>`;
  }
}
